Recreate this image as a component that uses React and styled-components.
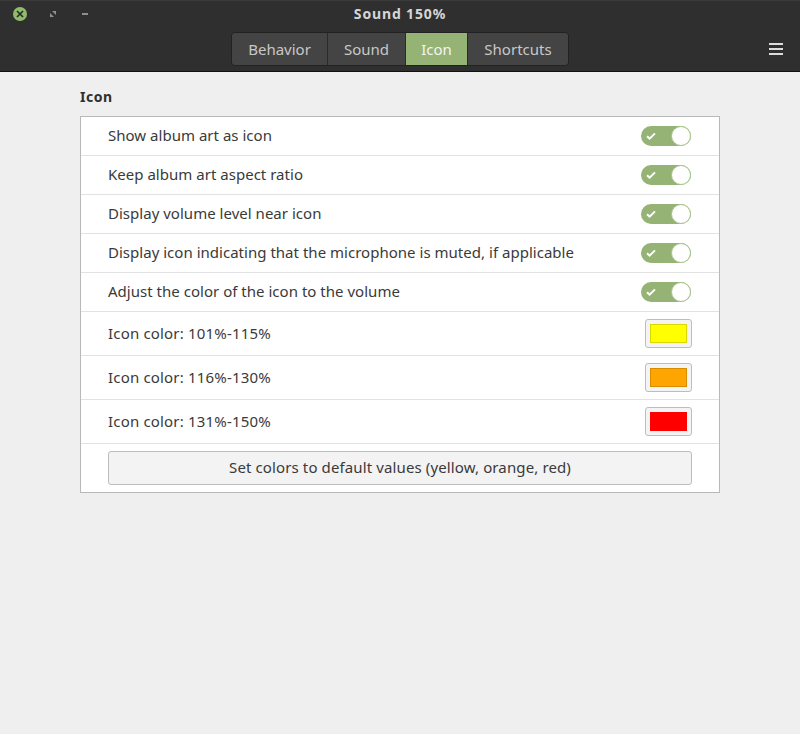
import React from 'react';
import styled, { createGlobalStyle } from 'styled-components';

const Global = createGlobalStyle`
  html, body { margin: 0; padding: 0; height: 100%; }
  body { background: #efefef; font-family: "Noto Sans", "Open Sans", sans-serif; }
`;

const Window = styled.div`
  width: 800px;
  height: 734px;
  background: #efefef;
  overflow: hidden;
`;

const Header = styled.header`
  height: 71px;
  background: #2f2f2f;
  border-bottom: 1px solid #111;
  box-shadow: inset 0 1px 0 #3a3a3a;
  position: relative;
  display: flex;
  flex-direction: column;
  align-items: center;
`;

const Title = styled.div`
  height: 32px;
  line-height: 28px;
  font-size: 14px;
  font-weight: 700;
  color: #d6d6d6;
  letter-spacing: 0.85px;
`;

const WindowButtons = styled.div`
  position: absolute;
  left: 13px;
  top: 7px;
  display: flex;
  align-items: center;
  gap: 19px;
`;

const WinButton = styled.svg`
  display: block;
  width: 14px;
  height: 14px;
`;

const Tabs = styled.div`
  display: flex;
  height: 34px;
  box-sizing: border-box;
  border: 1px solid #222;
  border-radius: 4px;
  overflow: hidden;
`;

const Tab = styled.div`
  box-sizing: border-box;
  width: ${p => p.$w}px;
  display: flex;
  align-items: center;
  justify-content: center;
  padding-bottom: 1px;
  font-size: 15px;
  color: ${p => (p.$active ? '#f4f4f4' : '#c8c8c8')};
  background: ${p => (p.$active ? '#95b374' : '#444444')};
  border-right: ${p => (p.$last ? 'none' : '1px solid #2a2a2a')};
`;

const MenuButton = styled.div`
  position: absolute;
  right: 17px;
  top: 43px;
  width: 14px;
  display: flex;
  flex-direction: column;
  gap: 3px;
`;

const MenuLine = styled.span`
  display: block;
  height: 2px;
  background: #dcdcdc;
`;

const Content = styled.main`
  padding: 0 80px;
`;

const SectionTitle = styled.h2`
  margin: 0;
  height: 44px;
  box-sizing: border-box;
  padding-top: 15px;
  line-height: 20px;
  font-size: 14px;
  font-weight: 700;
  color: #303030;
  letter-spacing: 0.5px;
`;

const Card = styled.section`
  background: #fff;
  border: 1px solid #b8b8b8;
`;

const Row = styled.div`
  box-sizing: border-box;
  height: ${p => p.$h}px;
  display: flex;
  align-items: center;
  justify-content: space-between;
  padding: 0 28px 0 27px;
  border-bottom: 1px solid #e2e2e2;
  font-size: 15px;
  color: #3a3a3a;
`;

const Label = styled.span`
  padding-bottom: 2px;
  letter-spacing: ${p => p.$spacing}px;
`;

const Switch = styled.div`
  position: relative;
  width: 50px;
  height: 20px;
  border-radius: 10px;
  background: #95b374;
  display: flex;
  align-items: center;
  padding-left: 5px;
  box-sizing: border-box;
`;

const Knob = styled.span`
  position: absolute;
  right: 0;
  top: 0;
  width: 18px;
  height: 18px;
  border-radius: 50%;
  background: #fff;
  border: 1px solid #a9c48c;
`;

const ColorButton = styled.div`
  box-sizing: border-box;
  width: 47px;
  height: 29px;
  margin-right: -1px;
  padding: 4px;
  background: #f4f4f4;
  border: 1px solid #bdbdbd;
  border-radius: 3px;
`;

const Swatch = styled.div`
  box-sizing: border-box;
  height: 19px;
  background: ${p => p.$color};
  border: 1px solid ${p => p.$edge};
`;

const FooterRow = styled.div`
  padding: 7px 27px;
`;

const ResetButton = styled.div`
  box-sizing: border-box;
  height: 34px;
  display: flex;
  align-items: center;
  justify-content: center;
  padding-bottom: 2px;
  background: #f3f3f3;
  border: 1px solid #bdbdbd;
  border-radius: 3px;
  font-size: 15px;
  letter-spacing: 0.12px;
  color: #3a3a3a;
`;

const Check = () => (
  <svg width="10" height="8" viewBox="0 0 10 8" style={{ display: 'block' }}>
    <path d="M1 4.2 L3.6 6.6 L9 1.4" fill="none" stroke="#fff" strokeWidth="2" />
  </svg>
);

const toggles = [
  'Show album art as icon',
  'Keep album art aspect ratio',
  'Display volume level near icon',
  'Display icon indicating that the microphone is muted, if applicable',
  'Adjust the color of the icon to the volume',
];

const colors = [
  { label: 'Icon color: 101%-115%', color: '#ffff00', edge: '#d9d900' },
  { label: 'Icon color: 116%-130%', color: '#ffa500', edge: '#d98c00' },
  { label: 'Icon color: 131%-150%', color: '#ff0000', edge: '#ff0000' },
];

export default function App() {
  return (
    <Window>
      <Global />
      <Header>
        <WindowButtons>
          <WinButton viewBox="0 0 14 14">
            <circle cx="7" cy="7" r="7" fill="#8fbb6a" />
            <path d="M4 4 L10 10 M10 4 L4 10" stroke="#2b2b2b" strokeWidth="1.7" />
          </WinButton>
          <WinButton viewBox="0 0 14 14">
            <path d="M6 4 H10 V8 Z M4 6 L8 10 H4 Z" fill="#909090" />
          </WinButton>
          <WinButton viewBox="0 0 14 14">
            <rect x="3" y="6" width="6" height="2" fill="#8f8f8f" />
          </WinButton>
        </WindowButtons>
        <Title>Sound 150%</Title>
        <Tabs>
          <Tab $w={96}>Behavior</Tab>
          <Tab $w={78}>Sound</Tab>
          <Tab $w={62} $active>Icon</Tab>
          <Tab $w={100} $last>Shortcuts</Tab>
        </Tabs>
        <MenuButton>
          <MenuLine />
          <MenuLine />
          <MenuLine />
        </MenuButton>
      </Header>
      <Content>
        <SectionTitle>Icon</SectionTitle>
        <Card>
          {toggles.map(t => (
            <Row key={t} $h={39}>
              <Label $spacing={0.02}>{t}</Label>
              <Switch>
                <Check />
                <Knob />
              </Switch>
            </Row>
          ))}
          {colors.map(c => (
            <Row key={c.label} $h={44}>
              <Label $spacing={0.18}>{c.label}</Label>
              <ColorButton>
                <Swatch $color={c.color} $edge={c.edge} />
              </ColorButton>
            </Row>
          ))}
          <FooterRow>
            <ResetButton>Set colors to default values (yellow, orange, red)</ResetButton>
          </FooterRow>
        </Card>
      </Content>
    </Window>
  );
}
